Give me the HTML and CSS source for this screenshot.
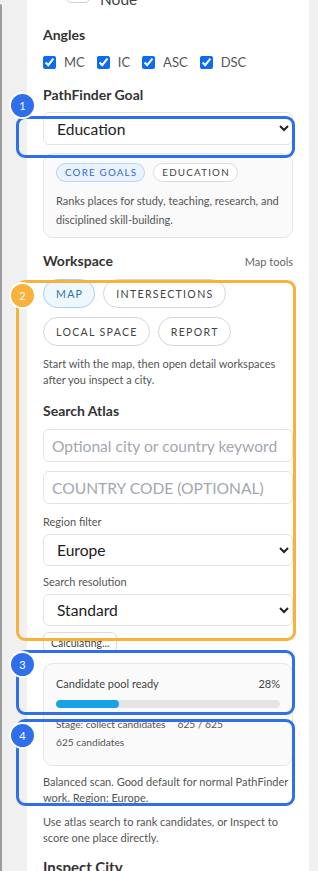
FILE: index.html
```html
<!DOCTYPE html>
<html lang="en">
<head>
  <meta charset="UTF-8" />
  <meta name="viewport" content="width=device-width, initial-scale=1.0" />
  <title>PathFinder</title>
  <link rel="stylesheet" href="styles.css">
</head>
<body>
  <div class="shell">
    <div class="rail"></div>
    <aside class="panel">
      <div class="node-row">
        <span class="node-box"></span>
        <span class="node-label">Node</span>
      </div>

      <h3 class="titulo">Angles</h3>
      <div class="angles">
        <label><input type="checkbox" checked> MC</label>
        <label><input type="checkbox" checked> IC</label>
        <label><input type="checkbox" checked> ASC</label>
        <label><input type="checkbox" checked> DSC</label>
      </div>

      <h3 class="titulo">PathFinder Goal</h3>
      <select class="campo select">
        <option>Education</option>
      </select>
      <div class="tarjeta goal-card">
        <div class="chips">
          <span class="chip chip-azul">CORE GOALS</span>
          <span class="chip">EDUCATION</span>
        </div>
        <p class="goal-desc">Ranks places for study, teaching, research, and disciplined skill-building.</p>
      </div>

      <div class="fila-titulo">
        <h3 class="titulo">Workspace</h3>
        <span class="enlace">Map tools</span>
      </div>
      <div class="tabs">
        <button class="tab activo">MAP</button>
        <button class="tab">INTERSECTIONS</button>
        <button class="tab">LOCAL SPACE</button>
        <button class="tab">REPORT</button>
      </div>
      <p class="ayuda">Start with the map, then open detail workspaces after you inspect a city.</p>

      <h3 class="titulo atlas">Search Atlas</h3>
      <input class="campo" type="text" placeholder="Optional city or country keyword">
      <input class="campo campo-2" type="text" placeholder="COUNTRY CODE (OPTIONAL)">

      <label class="etiqueta">Region filter</label>
      <select class="campo select campo-sel">
        <option>Europe</option>
      </select>
      <label class="etiqueta">Search resolution</label>
      <select class="campo select campo-sel">
        <option>Standard</option>
      </select>

      <button class="boton-calc">Calculating...</button>

      <div class="tarjeta progreso">
        <div class="prog-top">
          <span>Candidate pool ready</span>
          <span>28%</span>
        </div>
        <div class="barra"><div class="relleno" style="width: 28%"></div></div>
        <div class="stage">
          <span>Stage: collect candidates</span>
          <span>625 / 625</span>
        </div>
        <div class="stage">625 candidates</div>
      </div>

      <p class="ayuda nota">Balanced scan. Good default for normal PathFinder work. Region: Europe.</p>
      <p class="ayuda nota-2">Use atlas search to rank candidates, or Inspect to score one place directly.</p>

      <h3 class="titulo inspect">Inspect City</h3>
    </aside>
  </div>

  <!-- tour highlights -->
  <div class="marco azul m1"></div>
  <div class="marco naranja m2"></div>
  <div class="marco azul m3"></div>
  <div class="marco azul m4"></div>
  <span class="paso azul-bg p1">1</span>
  <span class="paso naranja-bg p2">2</span>
  <span class="paso azul-bg p3">3</span>
  <span class="paso azul-bg p4">4</span>
</body>
</html>
```
FILE: styles.css
```css
body {
  font-family: Lato, 'Noto Sans', sans-serif;
  margin: 0;
  background: #f0f0f0;
  height: 871px;
  overflow: hidden;
  position: relative;
  color: #333;
}

.shell {
  display: flex;
  height: 100%;
}

.rail {
  width: 2px;
  margin-top: 4px;
  background: #9c9c9c;
  border-top-right-radius: 3px;
}

.panel {
  margin-left: 25px;
  width: 250px;
  padding: 0 16px;
  background: #fff;
  overflow: hidden;
}

.node-row {
  display: flex;
  align-items: flex-start;
  gap: 10px;
  margin-top: -21px;
  padding-left: 23px;
  height: 24px;
}

.node-box {
  width: 22px;
  height: 22px;
  border: 1px solid #cfcfcf;
  border-radius: 5px;
}

.node-label {
  font-size: 15.5px;
  line-height: 20px;
  margin-top: 10px;
  color: #444;
}

.titulo {
  font-size: 14px;
  font-weight: 700;
  line-height: 20px;
  margin: 22px 0 0;
  color: #333;
}

.angles {
  display: flex;
  align-items: center;
  margin-top: 7px;
  height: 20px;
  margin-bottom: 13px;
}

.angles label {
  display: flex;
  align-items: center;
  font-size: 13px;
  color: #555;
  margin-right: 12px;
}

.angles input {
  width: 13px;
  height: 13px;
  margin: 0 8px 0 0;
  accent-color: #0b6cf0;
}

.angles + .titulo {
  margin-top: 0;
}

.campo {
  display: block;
  box-sizing: border-box;
  width: 250px;
  height: 33px;
  margin-top: 7px;
  padding: 0 8px;
  border: 1px solid #e4e4e4;
  border-radius: 6px;
  background: #fff;
  font-family: Lato, sans-serif;
  font-size: 15.6px;
  color: #222;
}

.select {
  padding: 0 6px 0 9px;
}

.campo::placeholder {
  color: #a3a8b0;
}

.campo-2 {
  margin-top: 9px;
}

.campo-sel {
  margin-top: 4px;
  height: 32px;
}

.tarjeta {
  background: #fafafa;
  border: 1px solid #e6e6e6;
  border-radius: 10px;
}

.goal-card {
  margin-top: 8px;
  padding: 9px 12px 8px;
}

.chips {
  display: flex;
  gap: 8px;
}

.chip {
  height: 19px;
  box-sizing: border-box;
  padding: 0 7px 0 8px;
  border: 1px solid #dcdcdc;
  border-radius: 10px;
  background: #fff;
  font-size: 9.8px;
  letter-spacing: 1.2px;
  line-height: 17px;
  color: #444;
}

.chip-azul {
  background: #e9f3ff;
  border-color: #b8d5f6;
  color: #3568d4;
}

.goal-desc {
  margin: 9px 0 0;
  font-size: 11px;
  line-height: 19px;
  color: #555;
}

.fila-titulo {
  display: flex;
  justify-content: space-between;
  align-items: center;
  margin-top: 13px;
}

.fila-titulo .titulo {
  margin: 0;
}

.enlace {
  font-size: 11px;
  color: #666;
}

.tabs {
  display: flex;
  flex-wrap: wrap;
  gap: 9px 8px;
  margin-top: 8px;
  width: 200px;
}

.tab {
  height: 29px;
  padding: 0 11px 0 12px;
  border: 1px solid #d6d6d6;
  border-radius: 15px;
  background: #fff;
  font-family: Lato, sans-serif;
  font-size: 10.6px;
  letter-spacing: 1.3px;
  color: #444;
}

.activo {
  background: #eef7fd;
  border-color: #a2d2f2;
  color: #2f72a6;
}

.ayuda {
  margin: 10px 0 0;
  font-size: 11px;
  line-height: 16px;
  color: #555;
}

.titulo.atlas {
  margin-top: 13px;
}

.atlas + .campo {
  margin-top: 8px;
}

.etiqueta {
  display: block;
  margin-top: 10px;
  font-size: 11px;
  line-height: 16px;
  color: #555;
}

.campo-sel + .etiqueta {
  margin-top: 8px;
}

.boton-calc {
  display: block;
  margin-top: 6px;
  height: 21px;
  padding: 0 7px;
  border: 1px solid #dcdcdc;
  border-radius: 6px;
  background: #fff;
  font-family: Lato, sans-serif;
  font-size: 10.5px;
  color: #444;
}

.progreso {
  margin-top: 10px;
  padding: 11px 12px 14px;
}

.prog-top {
  display: flex;
  justify-content: space-between;
  font-size: 11px;
  line-height: 18px;
  color: #444;
}

.barra {
  height: 8px;
  margin-top: 7px;
  border-radius: 4px;
  background: #e4e4e4;
  overflow: hidden;
}

.relleno {
  height: 100%;
  border-radius: 4px;
  background: #15a3e6;
}

.stage {
  display: flex;
  gap: 12px;
  font-size: 10.2px;
  line-height: 18px;
  color: #555;
}

.barra + .stage {
  margin-top: 7px;
}

.nota {
  margin-top: 8px;
}

.nota-2 {
  margin-top: 8px;
}

.titulo.inspect {
  margin-top: 11px;
  font-size: 15px;
}

/* tour overlay */
.marco {
  position: absolute;
  left: 16px;
  width: 273px;
  border: 3px solid;
  border-radius: 9px;
}

.azul {
  border-color: #2f6fec;
}

.naranja {
  border-color: #f6b23a;
}

.m1 { top: 116px; height: 36px; }
.m2 { top: 280px; height: 355px; width: 274px; }
.m3 { top: 650px; height: 59px; }
.m4 { top: 719px; height: 81px; }

.paso {
  position: absolute;
  left: 9px;
  width: 23px;
  height: 23px;
  border: 2px solid #fff;
  border-radius: 50%;
  color: #fff;
  font-size: 11px;
  line-height: 23px;
  text-align: center;
}

.azul-bg {
  background: #2f6fec;
}

.naranja-bg {
  background: #f6b23a;
}

.p1 { top: 92px; }
.p2 { top: 282px; }
.p3 { top: 651px; }
.p4 { top: 722px; }
```
